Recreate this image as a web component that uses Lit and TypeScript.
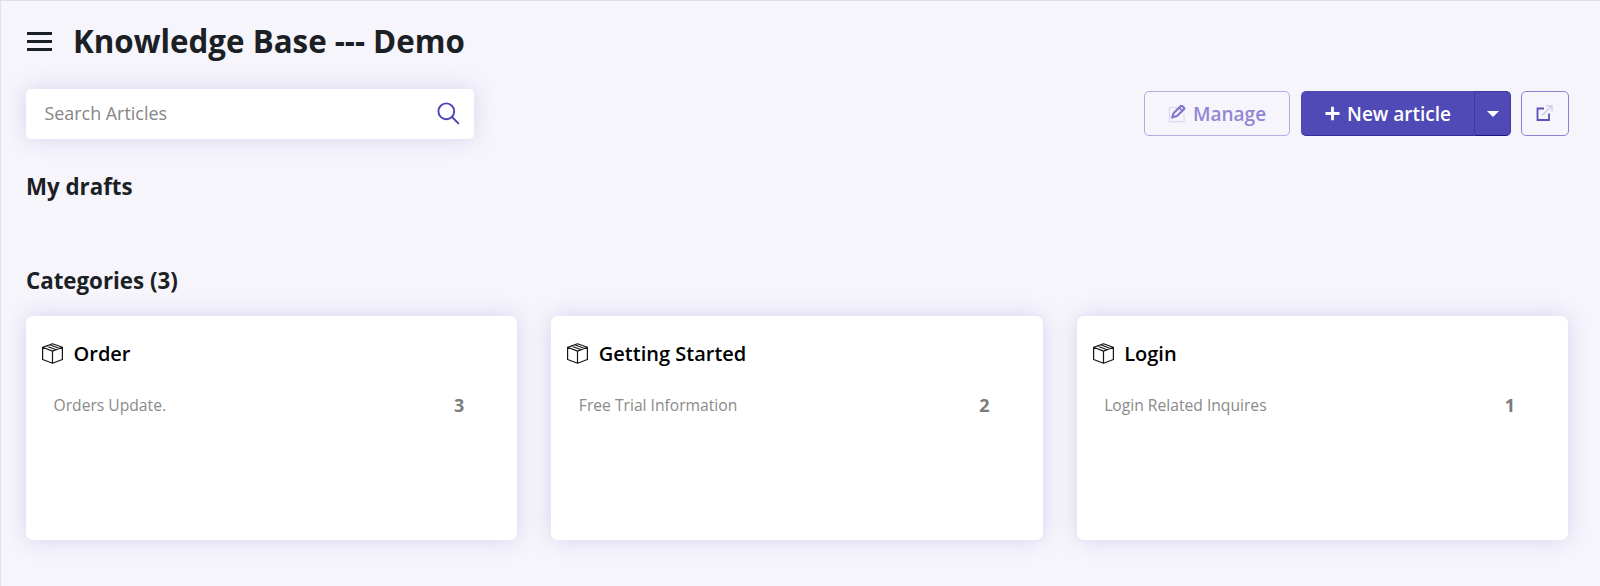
import { LitElement, html, css } from "lit";
import { customElement, property } from "lit/decorators.js";

const base = css`
  * { box-sizing: border-box; }
  svg { display: block; flex: none; }
`;

@customElement("category-card")
class CategoryCard extends LitElement {
  @property() name = "";
  @property() description = "";
  @property({ type: Number }) count = 0;

  static styles = [base, css`
    :host {
      display: block;
      height: 224px;
      background: #fff;
      border-radius: 7px;
      box-shadow: 0 0 22px rgba(80, 65, 170, 0.18);
      padding: 22px 53px 0 16px;
    }
    .head { display: flex; align-items: center; height: 31px; gap: 10.5px; }
    .name { font-size: 20px; line-height: 31px; font-weight: 600; color: #000; }
    .row { display: flex; justify-content: space-between; align-items: center; height: 24px; margin-top: 24px; padding-left: 11.5px; color: #8a8a8a; }
    .description { font-size: 15.65px; line-height: 24px; }
    .count { font-size: 18px; line-height: 24px; font-weight: 700; color: #7b7b7b; }
  `];

  render() {
    return html`
      <div class="head">
        <svg width="21" height="21" viewBox="0 0 21 21" fill="none" stroke="#151515" stroke-width="1.2" stroke-linejoin="round">
          <path d="M.6 4.300 10.500 .8l9.900 3.500v12.200l-9.900 3.700-9.900-3.700ZM.6 4.300l9.900 3.800 9.900-3.800M10.500 8.100v12.100M4.200 3l9.900 3.700M7.600 1.800l9.900 3.700"/>
        </svg>
        <span class="name">${this.name}</span>
      </div>
      <div class="row">
        <span class="description">${this.description}</span>
        <span class="count">${this.count}</span>
      </div>
    `;
  }
}

@customElement("app-root")
class AppRoot extends LitElement {
  static styles = [base, css`
    :host {
      display: block;
      box-sizing: border-box;
      height: 586px;
      overflow: hidden;
      background: #f6f5fc;
      border-top: 1px solid #dddbe5;
      border-left: 1px solid #e2e0e9;
      padding: 17px 32px 0 25px;
      font-family: "Open Sans", sans-serif;
      color: #1b2024;
    }
    .title-bar { display: flex; align-items: center; height: 47px; gap: 21px; }
    .menu { display: flex; flex-direction: column; gap: 5px; width: 25px; margin-left: 1px; }
    .bar { height: 3.1px; background: #1b2024; }
    h1, h2 { margin: 0; font-weight: 700; }
    h1 { font-size: 31.3px; line-height: 45px; }
    h2 { font-size: 22.3px; line-height: 32px; }
    .toolbar { display: flex; align-items: center; justify-content: space-between; height: 50px; margin-top: 24px; }
    .search {
      display: flex; align-items: center; justify-content: space-between;
      width: 448px; height: 50px; padding: 0 14px 1px 18.5px;
      background: #fff; border-radius: 5px;
      box-shadow: 0 0 22px rgba(80, 65, 170, 0.18);
    }
    .placeholder { font-size: 17.9px; color: #858585; padding-bottom: 1px; }
    .actions { display: flex; height: 45px; margin: -1px -1px 0 0; }
    .button { display: flex; align-items: center; height: 45px; font-size: 19px; font-weight: 600; border-radius: 5px; }
    .manage { width: 146px; border: 1px solid #b3abe1; color: #9186d3; padding-left: 23px; gap: 7px; }
    .create { width: 173px; margin-left: 11px; background: #4f4ab5; color: #fff; border-bottom: 1px solid #342d9d; border-radius: 5px 0 0 5px; padding: 1px 0 0 24px; gap: 7px; }
    .more { width: 37px; background: #4f4ab5; border: 1px solid #403a98; border-bottom-color: #21157f; border-radius: 0 5px 5px 0; justify-content: center; }
    .open { width: 48px; margin-left: 10px; border: 1px solid #8981d2; justify-content: center; padding: 0 2px 1px 0; }
    .drafts { margin-top: 32px; }
    .categories { margin-top: 62px; }
    .grid { display: grid; grid-template-columns: repeat(3, 1fr); gap: 34px; margin-top: 19px; }
  `];

  render() {
    return html`
      <div class="title-bar">
        <div class="menu"><div class="bar"></div><div class="bar"></div><div class="bar"></div></div>
        <h1>Knowledge Base --- Demo</h1>
      </div>
      <div class="toolbar">
        <div class="search">
          <span class="placeholder">Search Articles</span>
          <svg width="23" height="23" viewBox="0 0 23 23" fill="none" stroke="#4c43b8" stroke-width="1.9" stroke-linecap="round">
            <circle cx="9.3" cy="9.3" r="7.9"/><path d="m15 15 6.400 6.400"/>
          </svg>
        </div>
        <div class="actions">
          <div class="button manage">
            <svg width="18" height="18" viewBox="0 0 18 18" fill="none">
              <path d="M9 2.600H1.500v14h14.500V9" stroke="#dfdaf0" stroke-width="1.300"/>
              <path d="m4.200 12.500 1.500-4.500L12.800 1.200c1-1 4.200 1.600 3.200 2.900L9 11Z" stroke="#8578cf" stroke-width="2.300" stroke-linejoin="round"/>
              <path d="m11.300 3 3.400 3.100" stroke="#8578cf" stroke-width="1.600"/>
            </svg>
            <span>Manage</span>
          </div>
          <div class="button create">
            <svg width="15" height="15" viewBox="0 0 15 15" stroke="#fff" stroke-width="2.8"><path d="M7.500 .8v13.400M.5 7.500h14"/></svg>
            <span>New article</span>
          </div>
          <div class="button more">
            <svg width="12" height="6" viewBox="0 0 12 6" fill="#fff"><path d="M0 0h12L6 6Z"/></svg>
          </div>
          <div class="button open">
            <svg width="18" height="18" viewBox="0 0 18 18" fill="none">
              <path d="M9 4.500H2.500v11.500h11.500V9.500" stroke="#5951bd" stroke-width="1.800"/>
              <path d="m7 11.500 9.500-9.500M11 1.800h6v6" stroke="#cbc7e8" stroke-width="1.200"/>
            </svg>
          </div>
        </div>
      </div>
      <h2 class="drafts">My drafts</h2>
      <h2 class="categories">Categories (3)</h2>
      <div class="grid">
        <category-card name="Order" description="Orders Update." count="3"></category-card>
        <category-card name="Getting Started" description="Free Trial Information" count="2"></category-card>
        <category-card name="Login" description="Login Related Inquires" count="1"></category-card>
      </div>
    `;
  }
}
